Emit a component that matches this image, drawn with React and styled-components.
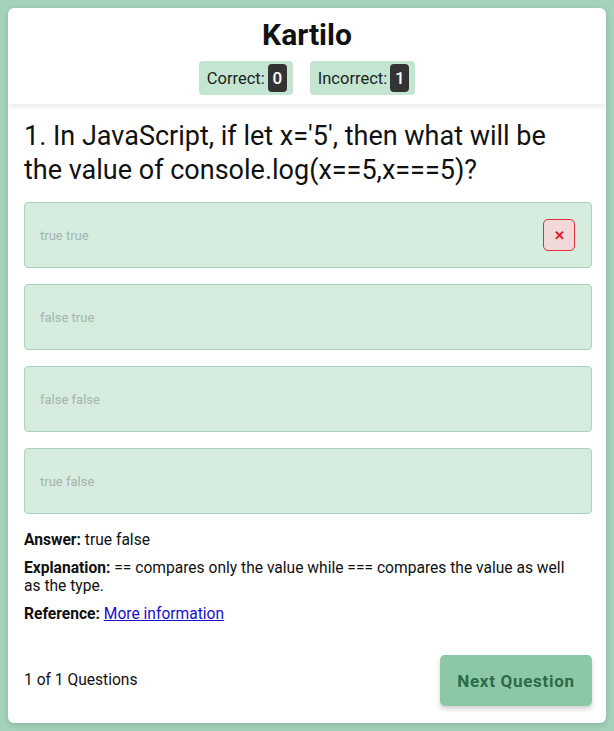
import styled, { createGlobalStyle } from "styled-components";

const GlobalStyle = createGlobalStyle`
  html, body {
    margin: 0;
    background: #a3d3ba;
  }
  body {
    padding: 8px;
    font-family: Roboto, "Liberation Sans", sans-serif;
    box-sizing: border-box;
  }
`;

const Card = styled.div`
  height: calc(100vh - 16px);
  background: #fff;
  border-radius: 6px;
  box-shadow: 0 2px 6px rgba(0, 0, 0, 0.15);
  display: flex;
  flex-direction: column;
  overflow: hidden;
`;

const Header = styled.div`
  display: flex;
  flex-direction: column;
  align-items: center;
  padding: 10px 0 9px;
  box-shadow: 0 3px 5px rgba(0, 0, 0, 0.08);
  position: relative;
  z-index: 1;
`;

const Title = styled.h1`
  margin: 0;
  font-size: 30px;
  font-weight: 700;
  line-height: 34px;
  color: #111;
`;

const Scores = styled.div`
  display: flex;
  gap: 17px;
  margin-top: 9px;
`;

const Score = styled.div`
  display: flex;
  align-items: center;
  gap: 3px;
  background: #c3e5d1;
  border-radius: 4px;
  padding: 3px 6px 3px 8px;
  font-size: 16.5px;
  color: #222;
`;

const Count = styled.span`
  background: #333;
  color: #fff;
  border-radius: 4px;
  min-width: 19px;
  height: 28px;
  display: flex;
  align-items: center;
  justify-content: center;
  font-size: 17px;
  font-weight: 500;
`;

const Body = styled.div`
  flex: 1;
  display: flex;
  flex-direction: column;
  padding: 15px 14px 17px 16px;
`;

const Question = styled.h2`
  margin: 0 0 15px;
  padding-right: 30px;
  font-size: 27px;
  font-weight: 400;
  line-height: 34px;
  color: #111;
`;

const Options = styled.div`
  display: flex;
  flex-direction: column;
  gap: 16px;
`;

const Option = styled.div`
  height: 66px;
  box-sizing: border-box;
  display: flex;
  align-items: center;
  justify-content: space-between;
  padding: 0 16px 0 15px;
  background: #d6ecdf;
  border: 1px solid #a9d3bd;
  border-radius: 4px;
  font-size: 13px;
  color: #a3b5aa;
`;

const Mark = styled.span`
  width: 32px;
  height: 32px;
  box-sizing: border-box;
  border: 1px solid #e0303a;
  border-radius: 5px;
  background: #f1d9d9;
  color: #e8141e;
  display: flex;
  align-items: center;
  justify-content: center;
  font-size: 13px;
  font-weight: 700;
`;

const Info = styled.p`
  margin: ${(p) => (p.first ? "17px 0 0" : "10px 0 0")};
  font-size: 15.6px;
  line-height: 18px;
  color: #111;
  padding-right: 12px;

  b {
    font-weight: 700;
  }

  a {
    color: #1a0dcc;
  }
`;

const Footer = styled.div`
  margin-top: auto;
  display: flex;
  align-items: center;
  justify-content: space-between;
`;

const Progress = styled.span`
  font-size: 15.6px;
  color: #111;
  margin-bottom: 2px;
`;

const NextButton = styled.button`
  width: 152px;
  height: 51px;
  border: none;
  border-radius: 5px;
  background: #8cc8a5;
  color: #2e6a4a;
  font-family: inherit;
  font-size: 17px;
  font-weight: 700;
  letter-spacing: 0.7px;
  box-shadow: 0 3px 5px rgba(0, 0, 0, 0.18);
  cursor: pointer;
`;

const options = ["true true", "false true", "false false", "true false"];

export default function App() {
  return (
    <>
      <GlobalStyle />
      <Card>
        <Header>
          <Title>Kartilo</Title>
          <Scores>
            <Score>Correct: <Count>0</Count></Score>
            <Score>Incorrect: <Count>1</Count></Score>
          </Scores>
        </Header>
        <Body>
          <Question>
            1. In JavaScript, if let x='5', then what will be the value of console.log(x==5,x===5)?
          </Question>
          <Options>
            {options.map((o, i) => (
              <Option key={o}>
                {o}
                {i === 0 && <Mark>✕</Mark>}
              </Option>
            ))}
          </Options>
          <Info first><b>Answer:</b> true false</Info>
          <Info><b>Explanation:</b> == compares only the value while === compares the value as well as the type.</Info>
          <Info><b>Reference:</b> <a href="#">More information</a></Info>
          <Footer>
            <Progress>1 of 1 Questions</Progress>
            <NextButton>Next Question</NextButton>
          </Footer>
        </Body>
      </Card>
    </>
  );
}
